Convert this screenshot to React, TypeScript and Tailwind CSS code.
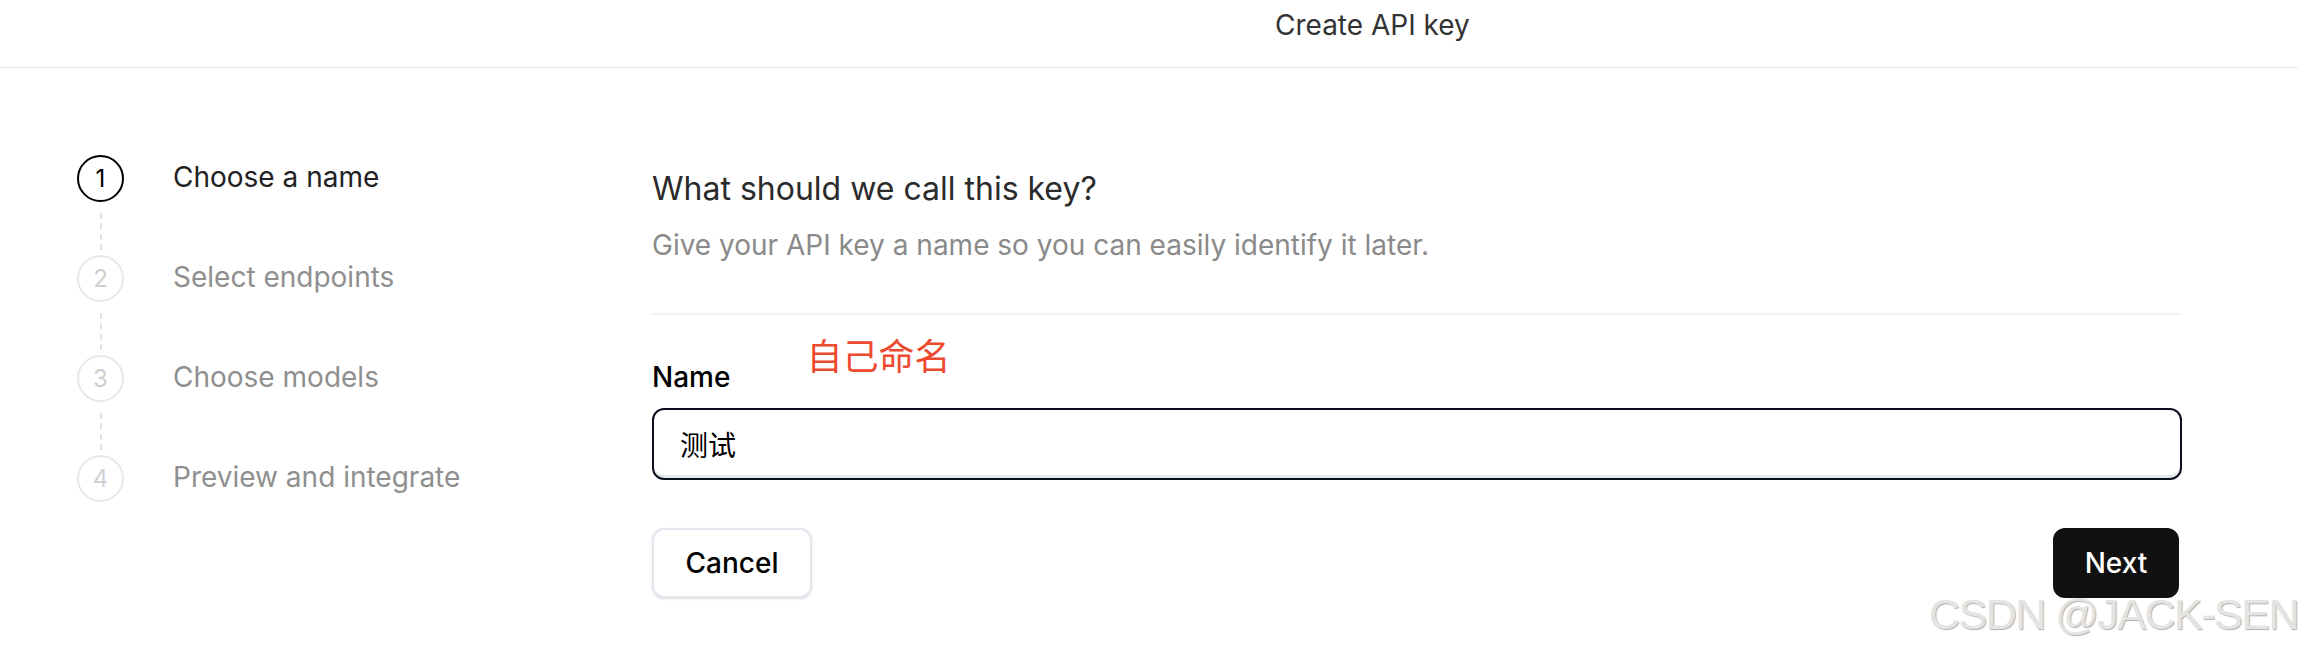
import React, { useState } from 'react';

const steps = ['Choose a name', 'Select endpoints', 'Choose models', 'Preview and integrate'];

function StepList({ current }: { current: number }) {
  return (
    <div className="flex flex-col">
      {steps.map((label, i) => {
        const active = i === current;
        const last = i === steps.length - 1;
        return (
          <div key={label} className="flex">
            <div className="flex w-[47px] flex-col items-center">
              <div
                className={
                  active
                    ? 'flex h-[47px] w-[47px] items-center justify-center rounded-full border-2 border-black text-[24px] text-black'
                    : 'flex h-[47px] w-[47px] items-center justify-center rounded-full border-2 border-[#e8e8e8] text-[24px] text-[#cfcfcf]'
                }
              >
                {i + 1}
              </div>
              {!last && (
                <div className="mt-[11px] mb-[5px] h-[37px] border-l-2 border-dashed border-[#e2e2e2]" />
              )}
            </div>
            <div
              className={
                active
                  ? 'ml-[49px] text-[28px] leading-[45px] text-[#222]'
                  : 'ml-[49px] text-[28px] leading-[45px] text-[#8f8f8f]'
              }
            >
              {label}
            </div>
          </div>
        );
      })}
    </div>
  );
}

export default function App() {
  const [name, setName] = useState('测试');

  return (
    <div className="relative h-[652px] overflow-hidden bg-white font-['Inter','Noto_Sans_CJK_SC',sans-serif]">
      <header className="flex h-[68px] items-center border-b border-[#e6e6e6] pl-[1275px] pb-[18px]">
        <h1 className="text-[28px] leading-[36px] text-[#333]">Create API key</h1>
      </header>

      <div className="flex items-start">
        <div className="w-[652px] pl-[77px] pt-[87px]">
          <StepList current={0} />
        </div>

        <main className="flex-1 pr-[116px] pt-[102px]">
          <h2 className="text-[32px] leading-[38px] text-[#2b2b2b]">What should we call this key?</h2>
          <p className="mt-[19px] text-[28px] leading-[36px] text-[#8a8a8a]">
            Give your API key a name so you can easily identify it later.
          </p>

          <div className="mt-[50px] h-[2px] bg-[#f3f3f3]" />

          <div className="mt-[20px] flex items-start">
            <label htmlFor="key-name" className="mt-[24px] text-[28px] font-medium leading-[36px] text-black">
              Name
            </label>
            <span className="ml-[76px] text-[36px] leading-[44px] text-[#ee4a2f]">自己命名</span>
          </div>

          <input
            id="key-name"
            autoFocus
            value={name}
            onChange={(e) => setName(e.target.value)}
            className="mt-[13px] h-[72px] w-full rounded-[12px] border-2 border-[#0b1020] px-[26px] text-[28px] text-black caret-black shadow-[inset_0_-3px_0_#e6e8ee] outline-none"
          />

          <div className="mt-[48px] flex items-center justify-between">
            <button className="h-[70px] w-[160px] rounded-[12px] border-2 border-[#e2e6ee] bg-white text-[28px] font-medium text-black shadow-sm">
              Cancel
            </button>
            <button className="mr-[3px] h-[70px] w-[126px] rounded-[12px] bg-[#111] text-[28px] font-medium text-white">
              Next
            </button>
          </div>
        </main>
      </div>

      <div className="pointer-events-none absolute right-0 bottom-[14px] font-['Liberation_Sans',sans-serif] text-[43px] leading-[48px] tracking-[-1.5px] text-[#e4e4e4] [text-shadow:1px_1px_1px_#b0b0b0]">
        CSDN @JACK-SEN
      </div>
    </div>
  );
}
